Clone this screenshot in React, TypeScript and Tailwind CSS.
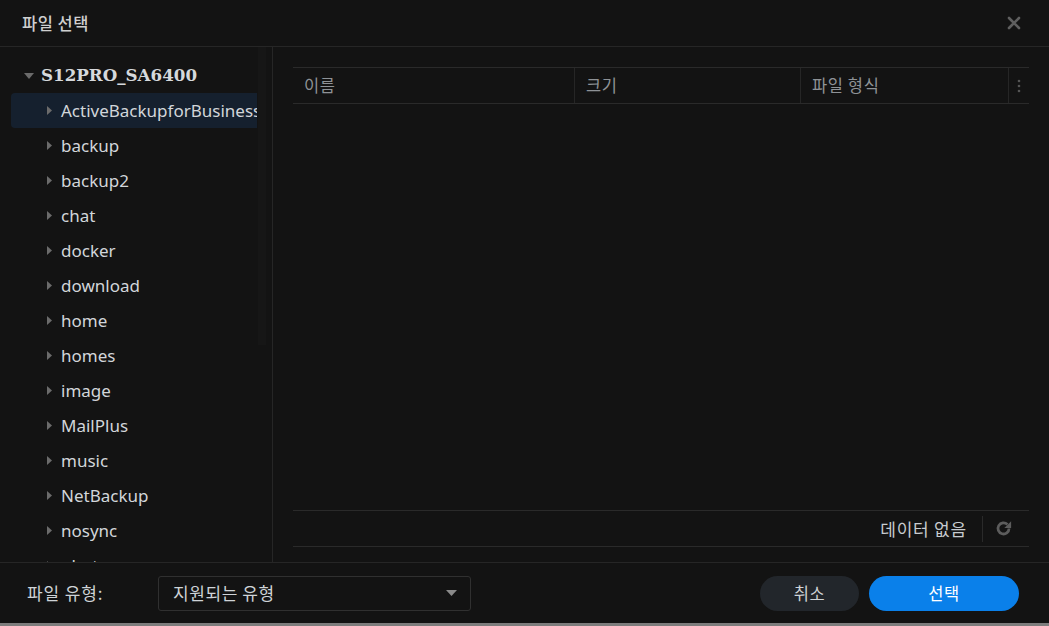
import React from 'react';

const folders = [
  'ActiveBackupforBusiness',
  'backup',
  'backup2',
  'chat',
  'docker',
  'download',
  'home',
  'homes',
  'image',
  'MailPlus',
  'music',
  'NetBackup',
  'nosync',
  'photo',
];

const kr = { fontFamily: '"Noto Sans CJK KR", "Noto Sans", sans-serif' };
const latin = { fontFamily: '"Noto Sans", "Noto Sans CJK KR", sans-serif' };

function Caret({ open = false }: { open?: boolean }) {
  return open ? (
    <svg width="10" height="6" viewBox="0 0 10 6" className="shrink-0">
      <path d="M0 0 L10 0 L5 6 Z" fill="#6b6b6b" />
    </svg>
  ) : (
    <svg width="5" height="9" viewBox="0 0 5 9" className="shrink-0">
      <path d="M0 0 L5 4.5 L0 9 Z" fill="#6b6b6b" />
    </svg>
  );
}

function TreeRow({ name, selected }: { name: string; selected?: boolean }) {
  return (
    <div
      className={`flex h-[35px] items-center rounded-l-[4px] pl-[36px] ${selected ? 'bg-[#15202e]' : ''}`}
    >
      <Caret />
      <span className="ml-[9px] whitespace-nowrap text-[17px] text-[#d2d6da]" style={latin}>
        {name}
      </span>
    </div>
  );
}

export default function App() {
  return (
    <div className="flex h-[626px] w-[1049px] flex-col overflow-hidden bg-[#131313]">
      {/* title bar */}
      <div className="flex h-[47px] shrink-0 items-center justify-between border-b border-[#262626] pl-[22px] pr-[28px]">
        <span className="text-[16.5px] font-medium tracking-[0.5px] text-[#cfcfcf]" style={kr}>
          파일 선택
        </span>
        <svg width="14" height="14" viewBox="0 0 14 14">
          <path d="M2 2 L12 12 M12 2 L2 12" stroke="#5f5f5f" strokeWidth="2.6" strokeLinecap="round" />
        </svg>
      </div>

      {/* body */}
      <div className="flex min-h-0 flex-1">
        {/* tree */}
        <div className="relative w-[273px] shrink-0 overflow-hidden border-r border-[#262626] pl-[11px] pt-[11px]">
          <div className="flex h-[35px] items-center pl-[13px]">
            <Caret open />
            <span
              className="ml-[7px] text-[16.7px] font-bold text-[#d6d9dc]"
              style={{ fontFamily: '"DejaVu Serif", serif' }}
            >
              S12PRO_SA6400
            </span>
          </div>
          <div className="w-[246px] overflow-hidden">
            {folders.map((f, i) => (
              <TreeRow key={f} name={f} selected={i === 0} />
            ))}
          </div>
          <div className="absolute right-[6px] top-0 h-[298px] w-[8px] bg-[#161616]" />
        </div>

        {/* list */}
        <div className="flex min-w-0 flex-1 flex-col px-[20px] pb-[15px] pt-[20px]">
          <div
            className="flex h-[37px] items-stretch border-y border-[#2a2a2a] text-[16.5px] tracking-[0.6px] text-[#8e9296]"
            style={kr}
          >
            <div className="flex w-[282px] items-center border-r border-[#262626] pl-[11px]">이름</div>
            <div className="flex w-[226px] items-center border-r border-[#262626] pl-[11px]">크기</div>
            <div className="flex w-[208px] items-center border-r border-[#262626] pl-[11px]">파일 형식</div>
            <div className="flex flex-1 items-center justify-center">
              <svg width="4" height="14" viewBox="0 0 4 14">
                <circle cx="2" cy="2" r="1.3" fill="#555" />
                <circle cx="2" cy="7" r="1.3" fill="#555" />
                <circle cx="2" cy="12" r="1.3" fill="#555" />
              </svg>
            </div>
          </div>
          <div className="flex-1" />
          <div className="flex h-[37px] items-center justify-end border-y border-[#2a2a2a]">
            <span className="pr-[15px] text-[17px] tracking-[0.8px] text-[#c8ccd0]" style={kr}>
              데이터 없음
            </span>
            <div className="h-[26px] w-px bg-[#2a2a2a]" />
            <div className="flex w-[46px] items-center pl-[12px]">
              <svg width="17" height="17" viewBox="0 0 16 16">
                <path
                  d="M13.2 8 A5.2 5.2 0 1 1 11.7 4.3"
                  fill="none"
                  stroke="#5c5c5c"
                  strokeWidth="2.6"
                />
                <path d="M15.2 1.2 V7.6 H8.8 Z" fill="#5c5c5c" />
              </svg>
            </div>
          </div>
        </div>
      </div>

      {/* footer */}
      <div className="flex h-[61px] shrink-0 items-center border-t border-[#262626] pl-[27px] pr-[30px]" style={kr}>
        <span className="w-[131px] text-[17px] tracking-[0.9px] text-[#cfd3d7]">파일 유형:</span>
        <div className="flex h-[35px] w-[313px] items-center justify-between rounded-[3px] border border-[#303030] pl-[14px] pr-[13px]">
          <span className="text-[17px] tracking-[0.6px] text-[#cfd3d7]">지원되는 유형</span>
          <svg width="11" height="6" viewBox="0 0 11 6">
            <path d="M0 0 L11 0 L5.5 6 Z" fill="#8a8a8a" />
          </svg>
        </div>
        <div className="flex-1" />
        <button className="h-[35px] w-[99px] rounded-full bg-[#22262b] text-[16.5px] tracking-[0.5px] text-[#cfd3d7]">
          취소
        </button>
        <button className="ml-[10px] h-[35px] w-[150px] rounded-full bg-[#0a80ea] text-[16.5px] tracking-[0.5px] text-white">
          선택
        </button>
      </div>
      <div className="h-[3px] shrink-0 bg-[#7d7d7d]" />
    </div>
  );
}
